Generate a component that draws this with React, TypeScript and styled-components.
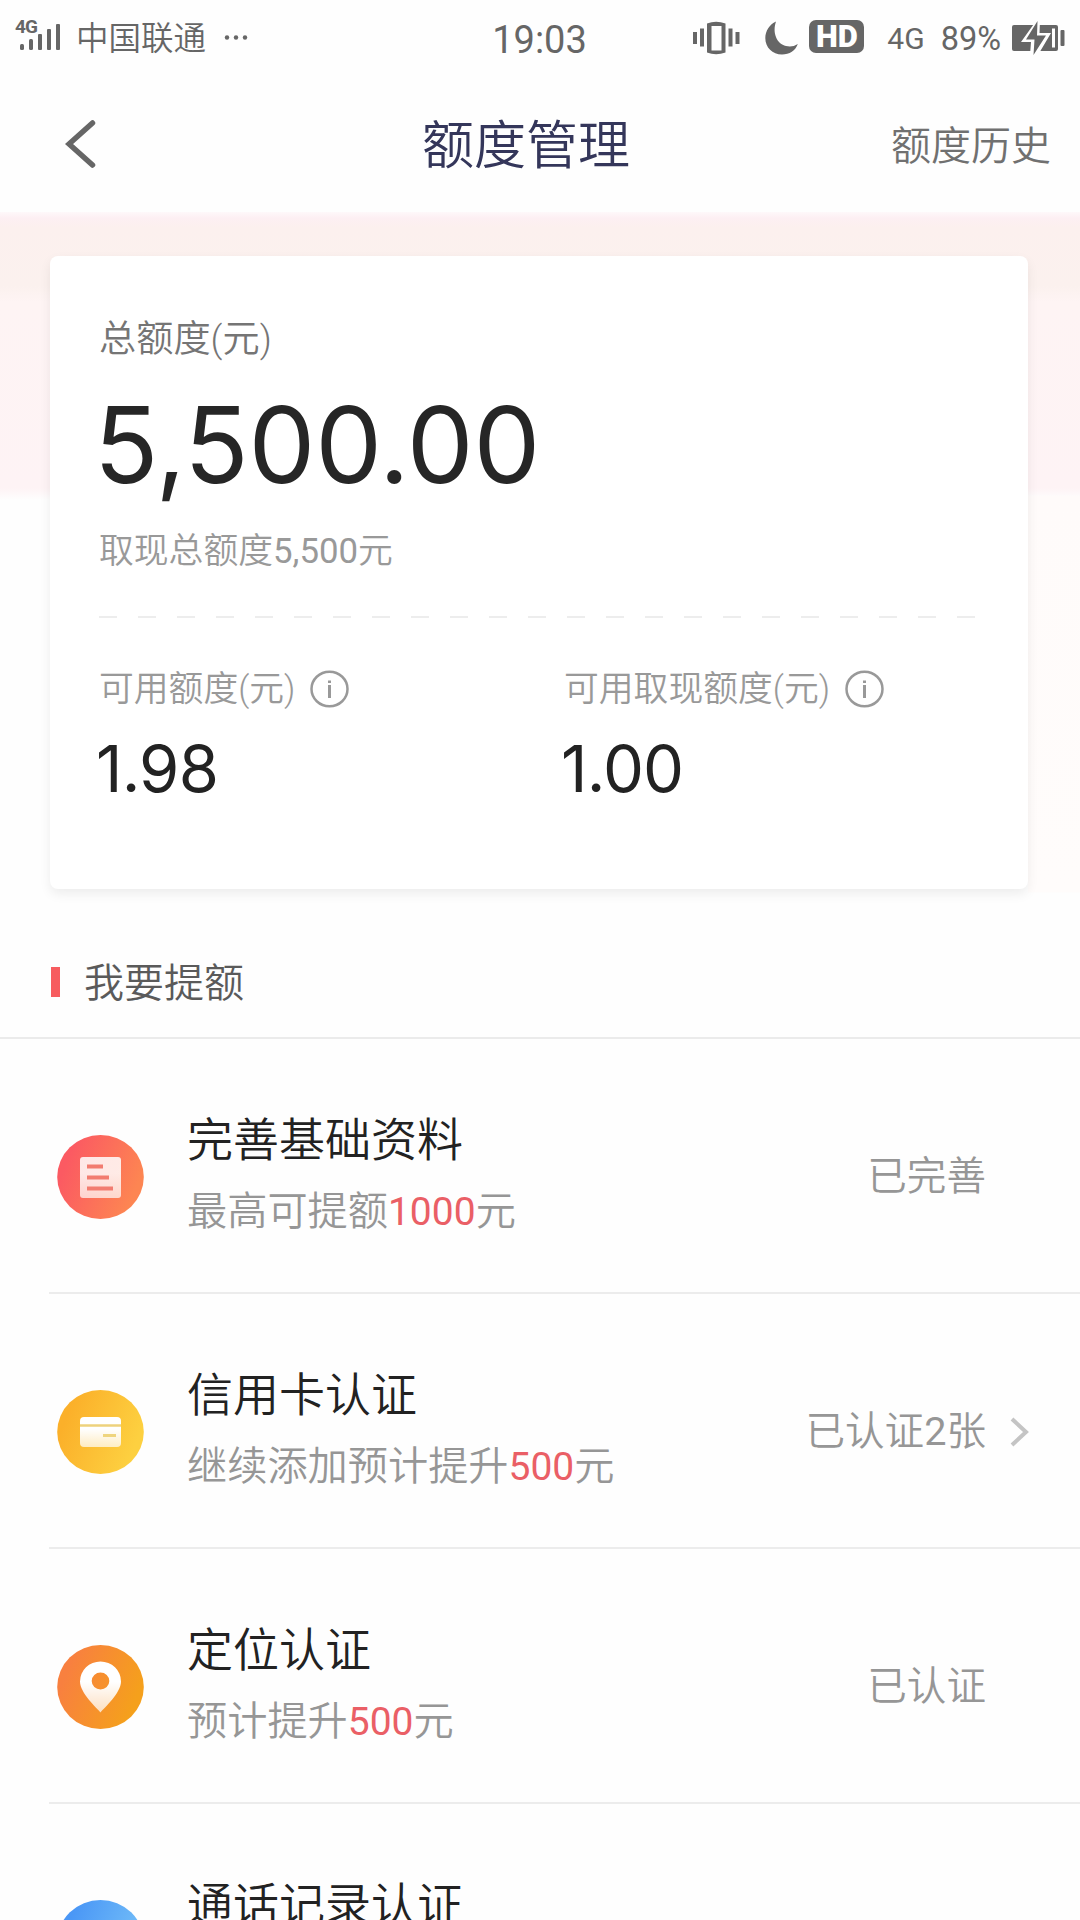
import React from "react";
import styled, { createGlobalStyle } from "styled-components";

const GlobalStyle = createGlobalStyle`
  * { box-sizing: border-box; }
  body {
    margin: 0;
    background: #fefefe;
    font-family: Roboto, "Noto Sans CJK SC", sans-serif;
    font-weight: 350;
    color: #222;
  }
`;

const Screen = styled.div`
  width: 1080px;
  height: 1920px;
  overflow: hidden;
  display: flex;
  flex-direction: column;
  background: #fefefe;
`;

const StatusBar = styled.div`
  height: 76px;
  flex: none;
  display: grid;
  grid-template-columns: 1fr 96px 1fr;
  align-items: center;
  padding: 0 15px;
  color: #666;
  font-weight: 400;
`;

const StatusGroup = styled.div<{ $end?: boolean }>`
  display: flex;
  align-items: center;
  justify-content: ${(p) => (p.$end ? "flex-end" : "flex-start")};
  svg { display: block; flex: none; }
`;

const Signal = styled.div`
  width: 46px;
  height: 34px;
  display: grid;
  align-items: start;
  margin-right: 15px;
  > * { grid-area: 1 / 1; }
`;

const SignalLabel = styled.span`
  font-size: 19px;
  line-height: 18px;
  font-weight: 700;
  letter-spacing: -1px;
  margin-top: -3px;
`;

const Carrier = styled.span`
  font-size: 32.5px;
  line-height: 44px;
  font-weight: 350;
  padding-top: 2px;
  margin-right: 18px;
`;

const Clock = styled.div`
  font-size: 38px;
  line-height: 44px;
  text-align: center;
  padding-top: 3px;
  margin-left: -1px;
`;

const HdBadge = styled.span`
  width: 55px;
  height: 33px;
  border-radius: 7px;
  background: #666;
  color: #fff;
  font: 900 31px/33px Roboto, sans-serif;
  text-align: center;
  margin: 0 23px 3px 11px;
`;

const StatusText = styled.span<{ $size: number; $gap: number }>`
  font-size: ${(p) => p.$size}px;
  line-height: 40px;
  padding-top: 2px;
  margin-right: ${(p) => p.$gap}px;
`;

const Header = styled.header`
  height: 136px;
  flex: none;
  display: grid;
  grid-template-columns: 357px 1fr auto;
  align-items: center;
  padding: 0 29px 0 65px;
`;

const Title = styled.h1`
  margin: 0;
  padding-top: 5px;
  font-size: 52px;
  line-height: 60px;
  font-weight: 350;
  color: #34365a;
  white-space: nowrap;
`;

const HeaderLink = styled.span`
  padding-top: 6px;
  font-size: 40px;
  line-height: 48px;
  color: #707070;
`;

const Hero = styled.section`
  height: 706px;
  flex: none;
  padding: 44px 52px 0 50px;
  background:
    linear-gradient(180deg, transparent 283px, #fffbfa 284px, #fffcfb 680px, transparent 681px) right / 52px 100% no-repeat,
    linear-gradient(
      180deg,
      #fef8fa 0,
      #fdeff3 6px,
      #fcf0ee 16px,
      #fbf1ee 74px,
      #fef4f4 90px,
      #fef3f5 276px,
      #fefefe 288px
    );
`;

const Card = styled.div`
  width: 978px;
  height: 633px;
  border-radius: 8px;
  background: #fff;
  box-shadow: 0 5px 12px rgba(0, 0, 0, 0.07);
  padding: 55px 48px 0 49px;
  display: flex;
  flex-direction: column;
`;

const Label = styled.div<{ $size?: number; $color?: string }>`
  display: flex;
  align-items: center;
  font-size: ${(p) => p.$size ?? 34.8}px;
  line-height: 56px;
  color: ${(p) => p.$color ?? "#999"};
  white-space: nowrap;
  svg { display: block; margin-left: 15px; }
`;

const Digits = styled.span`
  font-weight: 400;
`;

const Total = styled.div`
  margin: 19px 0 19px -5px;
  font: 400 106px/118px Inter, sans-serif;
  letter-spacing: -0.2px;
  color: #262626;
`;

const Dashes = styled.div`
  height: 2px;
  flex: none;
  margin-top: 37px;
  background: repeating-linear-gradient(90deg, #ededed 0 18px, transparent 18px 39px);
`;

const Split = styled.div`
  display: grid;
  grid-template-columns: 465px 1fr;
  padding-top: 43px;
`;

const Amount = styled.div`
  margin: 12px 0 0 -3px;
  font: 400 65px/80px Inter, sans-serif;
  letter-spacing: -0.8px;
  color: #222;
`;

const SectionTitle = styled.h2`
  margin: 0;
  height: 121px;
  flex: none;
  display: flex;
  align-items: center;
  gap: 24px;
  padding: 8px 0 0 51px;
  border-bottom: 2px solid #ebebeb;
  font-size: 40px;
  line-height: 56px;
  font-weight: 350;
  color: #5a5a5a;
  &::before {
    content: "";
    width: 9px;
    height: 30px;
    background: #f75c5f;
  }
  span { padding-top: 4px; }
`;

const Row = styled.div`
  height: 255px;
  flex: none;
  margin-left: 49px;
  padding: 23px 51px 0 8px;
  display: flex;
  align-items: center;
  border-bottom: 2px solid #ececec;
  svg { display: block; flex: none; }
`;

const RowText = styled.div`
  flex: 1;
  margin-left: 43px;
`;

const RowTitle = styled.div`
  font-size: 46px;
  line-height: 69px;
  color: #222;
`;

const RowSub = styled.div`
  font-size: 40.2px;
  line-height: 73px;
  color: #969696;
`;

const Accent = styled.span`
  color: #ea5f66;
  font-size: 39px;
  font-weight: 400;
`;

const RowState = styled.div`
  font-size: 39.6px;
  line-height: 56px;
  color: #969696;
`;

const ChevronSlot = styled.div`
  width: 43px;
  display: flex;
  justify-content: flex-end;
`;

const SignalIcon = () => (
  <svg width="46" height="34" viewBox="0 0 46 34" fill="#666">
    <rect x="5" y="23" width="4" height="6" rx="1.500" />
    <rect x="14" y="18" width="4" height="11" rx="1.500" />
    <rect x="23" y="13" width="4" height="16" rx="1" />
    <rect x="32" y="8" width="4" height="21" rx="1" />
    <rect x="41" y="3" width="4" height="26" rx="1" />
  </svg>
);

const DotsIcon = () => (
  <svg width="24" height="6" viewBox="0 0 24 6" fill="#666">
    <circle cx="3" cy="2.500" r="2.200" />
    <circle cx="12" cy="2.500" r="2.200" />
    <circle cx="21" cy="2.500" r="2.200" />
  </svg>
);

const VibrateIcon = () => (
  <svg width="47" height="34" viewBox="0 0 47 34" fill="#666">
    <rect x="0" y="11" width="4" height="12" />
    <rect x="7" y="7.500" width="4" height="18" />
    <path fillRule="evenodd" d="M14 2.500Q23 -1 32.500 2.500V31.500Q23 35 14 31.500ZM18.500 5H28.500V29.500H18.500Z" />
    <rect x="35.500" y="7.500" width="4" height="18" />
    <rect x="42.500" y="11" width="4" height="12" />
  </svg>
);

const MoonSvg = styled.svg`
  margin-left: 25px;
`;

const MoonIcon = () => (
  <MoonSvg width="33" height="34" viewBox="0 0 33 34" fill="#666">
    <path d="M11 .5C4.500 3.500 .3 10 .3 17C.3 26.500 7.500 33.500 17 33.500C24.500 33.500 30.500 29.500 32.800 23C29 25.500 25 26 21 25C12 23 7 12 11 .5Z" />
  </MoonSvg>
);

const BatteryIcon = () => (
  <svg width="53" height="34" viewBox="0 0 53 34">
    <rect x="0" y="4" width="46" height="26" rx="2" fill="#666" />
    <rect x="40" y="7.500" width="3" height="19" fill="#fff" />
    <rect x="48.500" y="9" width="4" height="16" rx="1" fill="#666" />
    <path d="M24 0L9 21H19L18 34H26L39 12H27.500L28 0Z" fill="#fff" />
    <path d="M25.500 0L14 18.500H22.500L21.500 34L34 14.500H25Z" fill="#666" />
  </svg>
);

const BackIcon = () => (
  <svg width="32" height="48" viewBox="0 0 32 48" fill="none" stroke="#666" strokeWidth="5.500" strokeLinecap="round">
    <path d="M27.500 3L4 24L27.500 45" />
  </svg>
);

const InfoIcon = () => (
  <svg width="39" height="38" viewBox="0 0 39 38" fill="none" stroke="#999" strokeWidth="2.500">
    <ellipse cx="19.500" cy="19" rx="18" ry="17.300" />
    <path d="M19.500 15V28M19.500 10.500V13" strokeWidth="3" />
  </svg>
);

const ChevronIcon = () => (
  <svg width="19" height="30" viewBox="0 0 19 30" fill="none" stroke="#c4c4c4" strokeWidth="4">
    <path d="M2 2L16 15L2 28" />
  </svg>
);

type Kind = "profile" | "card" | "location" | "calls";

const GRADIENTS: Record<Kind, [string, string]> = {
  profile: ["#fb5a62", "#fd8552"],
  card: ["#fbb02a", "#fdd040"],
  location: ["#f8803f", "#f5a01c"],
  calls: ["#4a97f6", "#74bff8"],
};

const RowIcon = ({ kind }: { kind: Kind }) => (
  <svg width="87" height="86" viewBox="0 0 87 86">
    <defs>
      <linearGradient id={`bg-${kind}`} x1="0" y1="0.300" x2="1" y2="0.700">
        <stop offset="0.100" stopColor={GRADIENTS[kind][0]} />
        <stop offset="0.900" stopColor={GRADIENTS[kind][1]} />
      </linearGradient>
      <linearGradient id={`fg-${kind}`} x1="0" y1="0" x2="0" y2="1">
        <stop offset="0.400" stopColor="#fff" stopOpacity={kind === "profile" ? 0.85 : 1} />
        <stop offset="1" stopColor="#fff" stopOpacity="0.700" />
      </linearGradient>
    </defs>
    <ellipse cx="43.500" cy="43" rx="43.300" ry="42" fill={`url(#bg-${kind})`} />
    {kind === "profile" && (
      <>
        <rect x="23" y="23" width="41" height="41" rx="3" fill="url(#fg-profile)" />
        <path d="M30 32.500H46M30 43.500H52M30 54.500H56" stroke="#f27c70" strokeWidth="4" />
      </>
    )}
    {kind === "card" && (
      <>
        <rect x="23" y="28" width="41" height="30" rx="4" fill="url(#fg-card)" />
        <path d="M23 36.500H64" stroke="#eed27c" strokeWidth="2.500" />
        <path d="M46 46.500H59" stroke="#efd57e" strokeWidth="3" />
      </>
    )}
    {kind === "location" && (
      <path
        fillRule="evenodd"
        fill="url(#fg-location)"
        d="M43.500 68.500C40 64 23 49 23 37.500A20.500 20 0 0 1 64 37.500C64 49 47 64 43.500 68.500ZM43.500 28.500A8.800 8.500 0 1 0 43.500 45.500A8.800 8.500 0 1 0 43.500 28.500Z"
      />
    )}
  </svg>
);

type Item = {
  kind: Kind;
  title: string;
  prefix: string;
  amount: string;
  state: React.ReactNode;
  link?: boolean;
};

const ITEMS: Item[] = [
  { kind: "profile", title: "完善基础资料", prefix: "最高可提额", amount: "1000", state: "已完善" },
  {
    kind: "card",
    title: "信用卡认证",
    prefix: "继续添加预计提升",
    amount: "500",
    state: <>已认证<Digits>2</Digits>张</>,
    link: true,
  },
  { kind: "location", title: "定位认证", prefix: "预计提升", amount: "500", state: "已认证" },
  { kind: "calls", title: "通话记录认证", prefix: "", amount: "", state: "" },
];

export default function App() {
  return (
    <Screen>
      <GlobalStyle />
      <StatusBar>
        <StatusGroup>
          <Signal>
            <SignalLabel>4G</SignalLabel>
            <SignalIcon />
          </Signal>
          <Carrier>中国联通</Carrier>
          <DotsIcon />
        </StatusGroup>
        <Clock>19:03</Clock>
        <StatusGroup $end>
          <VibrateIcon />
          <MoonIcon />
          <HdBadge>HD</HdBadge>
          <StatusText $size={30} $gap={16}>4G</StatusText>
          <StatusText $size={32.5} $gap={11}>89%</StatusText>
          <BatteryIcon />
        </StatusGroup>
      </StatusBar>
      <Header>
        <BackIcon />
        <Title>额度管理</Title>
        <HeaderLink>额度历史</HeaderLink>
      </Header>
      <Hero>
        <Card>
          <Label $size={37.2} $color="#757575">总额度(元)</Label>
          <Total>5,500.00</Total>
          <Label>取现总额度<Digits>5,500</Digits>元</Label>
          <Dashes />
          <Split>
            <div>
              <Label>可用额度(元)<InfoIcon /></Label>
              <Amount>1.98</Amount>
            </div>
            <div>
              <Label>可用取现额度(元)<InfoIcon /></Label>
              <Amount>1.00</Amount>
            </div>
          </Split>
        </Card>
      </Hero>
      <SectionTitle><span>我要提额</span></SectionTitle>
      {ITEMS.map((item) => (
        <Row key={item.kind}>
          <RowIcon kind={item.kind} />
          <RowText>
            <RowTitle>{item.title}</RowTitle>
            <RowSub>
              {item.prefix}
              <Accent>{item.amount}</Accent>
              {item.amount ? "元" : "\u00a0"}
            </RowSub>
          </RowText>
          <RowState>{item.state}</RowState>
          <ChevronSlot>{item.link && <ChevronIcon />}</ChevronSlot>
        </Row>
      ))}
    </Screen>
  );
}
